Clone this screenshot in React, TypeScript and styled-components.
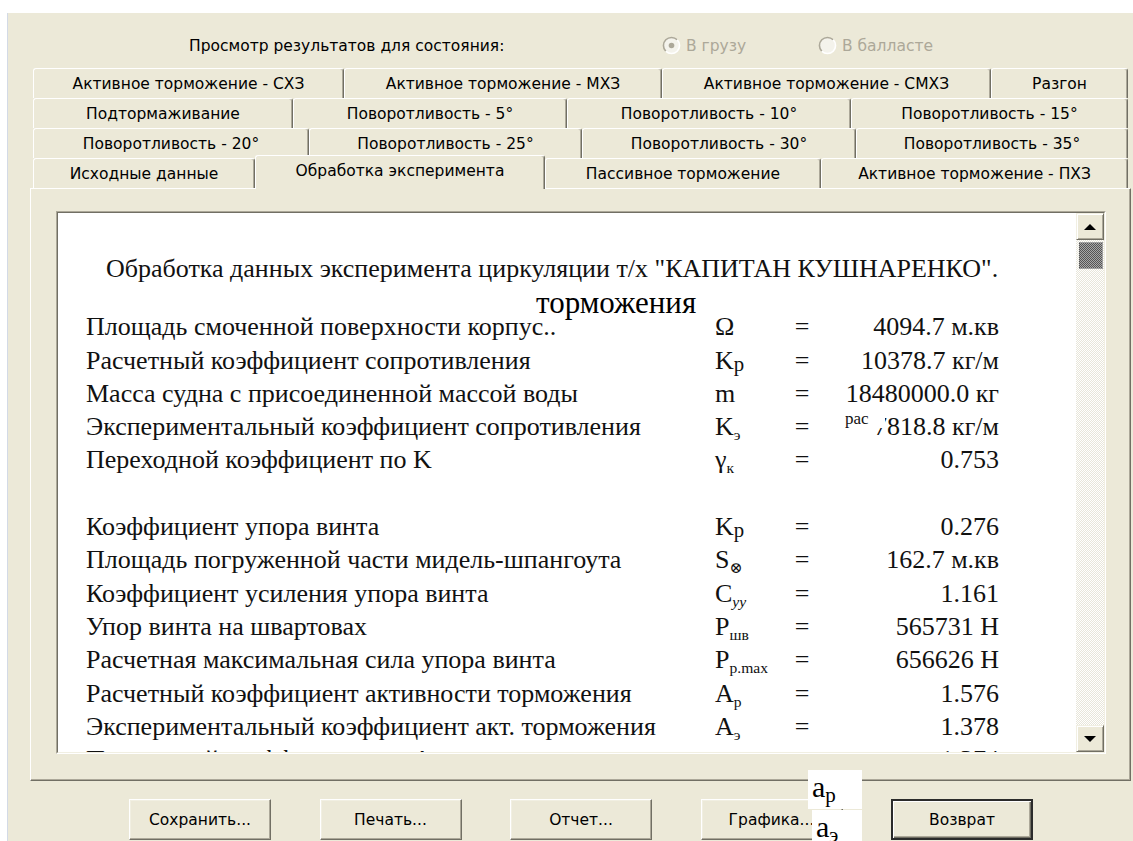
import React from 'react';
import styled, { createGlobalStyle, css } from 'styled-components';

const GlobalStyle = createGlobalStyle`
  html, body {
    margin: 0;
    padding: 0;
    background: #fff;
  }
  body {
    overflow: hidden;
  }
`;

const uiFont = `'DejaVu Sans', 'Liberation Sans', sans-serif`;
const reportFont = `'Liberation Serif', 'DejaVu Serif', serif`;

const Window = styled.div`
  position: relative;
  margin: 13px 0 0 7px;
  height: 828px;
  background: #ece9d8;
  box-shadow: inset 1px 0 0 #d3dae6;
  font-family: ${uiFont};
  font-size: 15.5px;
  color: #000;
  overflow: hidden;
  display: flex;
  flex-direction: column;
`;

/* state selector above the tabs */
const Header = styled.div`
  box-sizing: border-box;
  height: 55px;
  padding: 10px 0 0 182px;
  display: flex;
  align-items: center;
`;

const Caption = styled.div`
  width: 473px;
  white-space: nowrap;
`;

const Radio = styled.div`
  width: 156px;
  display: flex;
  align-items: center;
  gap: 5px;
  color: #aca899;
  white-space: nowrap;
`;

const RadioMark = ({ checked }: { checked?: boolean }) => (
  <svg width="19" height="19" viewBox="0 0 19 19">
    <circle cx="9.5" cy="9.5" r="8" fill="#f4f3ec" />
    <path d="M3.8 15.2 A8 8 0 0 1 15.2 3.8" fill="none" stroke="#aca899" strokeWidth="1.6" />
    <path d="M15.2 3.8 A8 8 0 0 1 3.8 15.2" fill="none" stroke="#ffffff" strokeWidth="1.6" />
    {checked && <circle cx="9.5" cy="9.5" r="2.8" fill="#aca899" />}
  </svg>
);

/* multi-row tab strip */
const TabStrip = styled.div`
  padding-left: 26px;
  display: flex;
  flex-direction: column;
`;

const TabRow = styled.div`
  display: flex;
  height: 30px;
`;

const Tab = styled.div<{ $w: number; $active?: boolean }>`
  box-sizing: border-box;
  width: ${p => p.$w}px;
  height: 30px;
  flex: none;
  display: flex;
  align-items: center;
  justify-content: center;
  background: #ece9d8;
  border-top: 1px solid #fff;
  border-left: 1px solid #fff;
  border-right: 1px solid #716f64;
  border-radius: 3px 3px 0 0;
  box-shadow: inset -1px 0 0 #aca899;
  white-space: nowrap;

  ${p =>
    p.$active &&
    css`
      position: relative;
      z-index: 2;
      height: 34px;
      margin-top: -3px;
      padding-bottom: 3px;
    `}
`;

const Panel = styled.div`
  position: relative;
  z-index: 1;
  box-sizing: border-box;
  margin-left: 23px;
  width: 1101px;
  height: 593px;
  flex: none;
  border-top: 1px solid #fff;
  border-left: 1px solid #fff;
  border-right: 1px solid #716f64;
  border-bottom: 1px solid #716f64;
  box-shadow: inset -1px -1px 0 #aca899;
  padding: 22px 24px 26px 25px;
  display: flex;
`;

const ReportBox = styled.div`
  flex: 1;
  display: flex;
  background: #fff;
  border: 1px solid;
  border-color: #aca899 #fff #fff #aca899;
  overflow: hidden;
`;

const ReportFrame = styled.div`
  flex: 1;
  display: flex;
  border: 1px solid;
  border-color: #716f64 #f1efe2 #f1efe2 #716f64;
  overflow: hidden;
`;

const Report = styled.div`
  position: relative;
  flex: 1;
  overflow: hidden;
  padding: 38.5px 0 0 28px;
  font-family: ${reportFont};
  font-size: 26px;
  color: #111;
`;

const Title = styled.div`
  margin-left: 20px;
  height: 33px;
  line-height: 33px;
  white-space: nowrap;
`;

const Stray = styled.div`
  position: absolute;
  left: 478px;
  top: 73px;
  font-size: 31px;
  line-height: 34px;
  color: #000;
`;

const Rows = styled.div`
  margin-top: 25.8px;
`;

const Row = styled.div`
  display: grid;
  grid-template-columns: 629px 75px 24px 185px;
  height: 33.3px;
  line-height: 33.3px;
  white-space: nowrap;
`;

const Eq = styled.span`
  text-align: center;
`;

const Value = styled.span`
  position: relative;
  text-align: right;
`;

const Sub = styled.sub<{ $size?: number; $drop?: number; $italic?: boolean }>`
  font-size: ${p => p.$size ?? 0.6}em;
  vertical-align: ${p => -(p.$drop ?? 0.35)}em;
  line-height: 0;
  font-style: ${p => (p.$italic ? 'italic' : 'normal')};
`;

const Patch = styled.span`
  position: absolute;
  right: 114px;
  top: 2px;
  width: 40px;
  height: 16px;
  background: #fff;
  font-size: 17px;
  line-height: 14px;
  text-align: left;
`;

/* classic scroll bar */
const ScrollBar = styled.div`
  width: 28px;
  flex: none;
  display: flex;
  flex-direction: column;
  background: repeating-conic-gradient(#ffffff 0 25%, #e8e6da 0 50%) 0 0 / 2px 2px;
`;

const ScrollButton = styled.div`
  box-sizing: border-box;
  height: 27px;
  flex: none;
  display: flex;
  align-items: center;
  justify-content: center;
  background: #ece9d8;
  border: 1px solid;
  border-color: #f1efe2 #716f64 #716f64 #f1efe2;
  box-shadow: inset 1px 1px 0 #fff, inset -1px -1px 0 #aca899;
`;

const Arrow = styled.span<{ $down?: boolean }>`
  width: 0;
  height: 0;
  border-left: 6px solid transparent;
  border-right: 6px solid transparent;
  ${p =>
    p.$down
      ? css`
          border-top: 6px solid #000;
        `
      : css`
          border-bottom: 6px solid #000;
        `}
`;

const Thumb = styled.div`
  box-sizing: border-box;
  height: 27px;
  margin: 2px 1px 0 3px;
  border: 1px dotted #9a9a9a;
  background: repeating-conic-gradient(#555 0 25%, #a8a8a8 0 50%) 0 0 / 2px 2px;
`;

const Track = styled.div`
  flex: 1;
`;

/* dialog buttons */
const Footer = styled.div`
  display: flex;
  gap: 48.5px;
  padding: 18px 0 0 122px;
`;

const Button = styled.div<{ $default?: boolean }>`
  box-sizing: border-box;
  width: 142px;
  height: 41px;
  flex: none;
  display: flex;
  align-items: center;
  justify-content: center;
  background: #ece9d8;
  border: 1px solid;
  border-color: #fff #716f64 #716f64 #fff;
  box-shadow: inset -1px -1px 0 #aca899, inset 1px 1px 0 #f1efe2;
  white-space: nowrap;

  ${p =>
    p.$default &&
    css`
      border: 2px solid #2b2b2b;
      box-shadow: inset 1px 1px 0 #fff, inset -1px -1px 0 #716f64, inset -2px -2px 0 #aca899;
    `}
`;

const Label = styled.div<{ $left: number; $top: number; $w: number; $h: number }>`
  position: absolute;
  z-index: 3;
  left: ${p => p.$left}px;
  top: ${p => p.$top}px;
  width: ${p => p.$w}px;
  height: ${p => p.$h}px;
  box-sizing: border-box;
  padding-left: 4px;
  background: #fff;
  font-family: ${reportFont};
  font-size: 30px;
  line-height: 34px;
  color: #000;
  overflow: hidden;
`;

type TabDef = { text: string; w: number; active?: boolean };

const tabRows: TabDef[][] = [
  [
    { text: 'Активное торможение - СХЗ', w: 311 },
    { text: 'Активное торможение - МХЗ', w: 318 },
    { text: 'Активное торможение - СМХЗ', w: 329 },
    { text: 'Разгон', w: 137 },
  ],
  [
    { text: 'Подтормаживание', w: 260 },
    { text: 'Поворотливость - 5°', w: 274 },
    { text: 'Поворотливость - 10°', w: 284 },
    { text: 'Поворотливость - 15°', w: 277 },
  ],
  [
    { text: 'Поворотливость - 20°', w: 276 },
    { text: 'Поворотливость - 25°', w: 273 },
    { text: 'Поворотливость - 30°', w: 274 },
    { text: 'Поворотливость - 35°', w: 272 },
  ],
  [
    { text: 'Исходные данные', w: 222 },
    { text: 'Обработка эксперимента', w: 290, active: true },
    { text: 'Пассивное торможение', w: 276 },
    { text: 'Активное торможение - ПХЗ', w: 307 },
  ],
];

type Line = { label: string; sym: React.ReactNode; value: React.ReactNode } | null;

const lines: Line[] = [
  { label: 'Площадь смоченной поверхности корпус..', sym: 'Ω', value: '4094.7 м.кв' },
  { label: 'Расчетный коэффициент сопротивления', sym: <>K<Sub $size={0.8} $drop={0.12}>p</Sub></>, value: '10378.7 кг/м' },
  { label: 'Масса судна с присоединенной массой воды', sym: 'm', value: '18480000.0 кг' },
  {
    label: 'Экспериментальный коэффициент сопротивления',
    sym: <>K<Sub>э</Sub></>,
    value: <>7818.8 кг/м<Patch>рас</Patch></>,
  },
  { label: 'Переходной коэффициент по K', sym: <>γ<Sub>к</Sub></>, value: '0.753' },
  null,
  { label: 'Коэффициент упора винта', sym: <>K<Sub $size={0.8} $drop={0.12}>p</Sub></>, value: '0.276' },
  { label: 'Площадь погруженной части мидель-шпангоута', sym: <>S<Sub>⊗</Sub></>, value: '162.7 м.кв' },
  { label: 'Коэффициент усиления упора винта', sym: <>C<Sub $italic>yy</Sub></>, value: '1.161' },
  { label: 'Упор винта на швартовах', sym: <>P<Sub>шв</Sub></>, value: '565731 H' },
  { label: 'Расчетная максимальная сила упора винта', sym: <>P<Sub>p.max</Sub></>, value: '656626 H' },
  { label: 'Расчетный коэффициент активности торможения', sym: <>A<Sub>p</Sub></>, value: '1.576' },
  { label: 'Экспериментальный коэффициент акт. торможения', sym: <>A<Sub>э</Sub></>, value: '1.378' },
  { label: 'Переходной коэффициент по A', sym: <>γ<Sub>A</Sub></>, value: '1.374' },
];

export default function App() {
  return (
    <>
      <GlobalStyle />
      <Window>
        <Header>
          <Caption>Просмотр результатов для состояния:</Caption>
          <Radio>
            <RadioMark checked />В грузу
          </Radio>
          <Radio>
            <RadioMark />В балласте
          </Radio>
        </Header>

        <TabStrip>
          {tabRows.map((row, i) => (
            <TabRow key={i}>
              {row.map(t => (
                <Tab key={t.text} $w={t.w} $active={t.active}>
                  {t.text}
                </Tab>
              ))}
            </TabRow>
          ))}
        </TabStrip>

        <Panel>
          <ReportBox>
            <ReportFrame>
              <Report>
                <Title>Обработка данных эксперимента циркуляции т/х "КАПИТАН КУШНАРЕНКО".</Title>
                <Stray>торможения</Stray>
                <Rows>
                  {lines.map((l, i) =>
                    l ? (
                      <Row key={i}>
                        <span>{l.label}</span>
                        <span>{l.sym}</span>
                        <Eq>=</Eq>
                        <Value>{l.value}</Value>
                      </Row>
                    ) : (
                      <Row key={i} />
                    ),
                  )}
                </Rows>
              </Report>
              <ScrollBar>
                <ScrollButton>
                  <Arrow />
                </ScrollButton>
                <Thumb />
                <Track />
                <ScrollButton>
                  <Arrow $down />
                </ScrollButton>
              </ScrollBar>
            </ReportFrame>
          </ReportBox>
        </Panel>

        <Footer>
          <Button>Сохранить...</Button>
          <Button>Печать...</Button>
          <Button>Отчет...</Button>
          <Button>Графика...</Button>
          <Button $default>Возврат</Button>
        </Footer>

        <Label $left={801} $top={757} $w={54} $h={39}>
          a<Sub $size={0.7} $drop={0.25}>p</Sub>
        </Label>
        <Label $left={805} $top={797} $w={50} $h={40}>
          a<Sub $size={0.7} $drop={0.25}>э</Sub>
        </Label>
      </Window>
    </>
  );
}
